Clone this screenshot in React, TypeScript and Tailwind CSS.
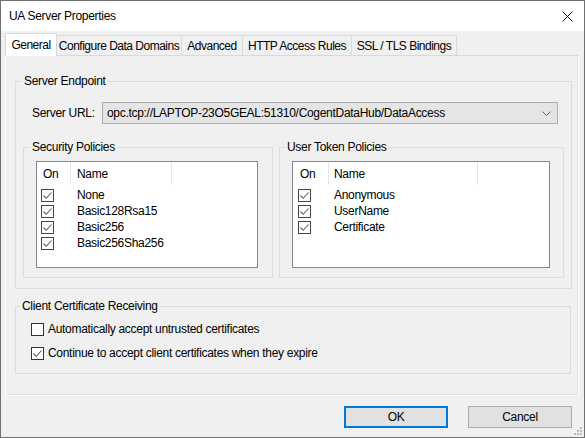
import React from "react";

const font = "font-['Liberation_Sans',Arial,sans-serif] tracking-[-0.3px]";

function Box({ checked, tone = "#333333" }: { checked: boolean; tone?: string }) {
  return (
    <span className="flex h-[13px] w-[13px] shrink-0 items-center justify-center border bg-white" style={{ borderColor: tone }}>
      {checked && (
        <svg width="11" height="11" viewBox="0 0 11 11">
          <path d="M1.5 5.5 L4.3 8.3 L9.5 2.5" fill="none" stroke="#5c5c5c" strokeWidth="1.1" />
        </svg>
      )}
    </span>
  );
}

function ListView({
  width,
  col1,
  col2,
  onPad,
  boxPad,
  namePad,
  rows,
}: {
  width: string;
  col1: string;
  col2: string;
  onPad: string;
  boxPad: string;
  namePad: string;
  rows: string[];
}) {
  return (
    <div className={`${width} h-[107px] border border-[#828790] bg-white`}>
      <div className="flex h-[25px] items-start">
        <div className={`${col1} ${onPad} flex h-[23px] items-center border-r border-[#e5e5e5]`}>On</div>
        <div className={`${col2} ${namePad} flex h-[23px] items-center border-r border-[#e5e5e5]`}>Name</div>
      </div>
      {rows.map((r) => (
        <div key={r} className="flex h-[16px] items-center">
          <div className={`${col1} ${boxPad} flex`}>
            <Box checked tone="#444444" />
          </div>
          <div className={namePad}>{r}</div>
        </div>
      ))}
    </div>
  );
}

export default function App() {
  return (
    <div className={`relative flex h-[438px] w-[585px] flex-col border border-[#707070] bg-[#f0f0f0] text-[12px] text-black ${font}`}>
      {/* Title bar */}
      <div className="flex h-[30px] shrink-0 items-center justify-between bg-white pl-[8px] pr-[11px]">
        <span>UA Server Properties</span>
        <svg width="11" height="11" viewBox="0 0 11 11">
          <path d="M0.5 0.5 L10.5 10.5 M10.5 0.5 L0.5 10.5" stroke="#111" strokeWidth="1" />
        </svg>
      </div>

      {/* Tabs */}
      <div className="mt-[2px] flex h-[22px] items-end whitespace-nowrap pl-[4px] tracking-[-0.5px]">
        <div className="relative z-10 -mb-px flex h-[23px] w-[52px] items-start justify-center border border-b-0 border-[#d9d9d9] bg-white pt-[2px]">
          General
        </div>
        {[
          ["Configure Data Domains", "w-[126px]"],
          ["Advanced", "w-[62px]"],
          ["HTTP Access Rules", "w-[110px]"],
          ["SSL / TLS Bindings", "w-[106px]"],
        ].map(([label, w]) => (
          <div key={label} className={`-ml-px flex h-[20px] ${w} items-center justify-center border border-b-0 border-[#d9d9d9] bg-[#f0f0f0] pt-px`}>
            {label}
          </div>
        ))}
      </div>

      {/* Tab panel */}
      <div className="ml-[4px] h-[341px] w-[574px] border border-white border-t-[#d9d9d9] pl-[9px] pr-[7px] pt-[17px] shadow-[inset_-1px_-1px_0_#e3e3e3]">
        <fieldset className="border border-[#dcdcdc]">
          <legend className="ml-[6px] px-[2px] leading-[16px]">Server Endpoint</legend>
          <div className="px-[7px] pb-[10px] pt-[13px]">
            <div className="flex h-[22px] items-center pl-[9px]">
              <span className="w-[70px]">Server URL:</span>
              <div className="flex h-[22px] w-[456px] items-center justify-between border border-[#adadad] bg-[#e5e5e5] pl-[4px] pr-[6px]">
                <span>opc.tcp://LAPTOP-23O5GEAL:51310/CogentDataHub/DataAccess</span>
                <svg width="9" height="5" viewBox="0 0 9 5">
                  <path d="M0.5 0.5 L4.5 4.5 L8.5 0.5" fill="none" stroke="#606060" strokeWidth="1" />
                </svg>
              </div>
            </div>

            <div className="mt-[15px] flex gap-[6px]">
              <fieldset className="w-[250px] border border-[#dcdcdc]">
                <legend className="ml-[6px] px-[2px] leading-[16px]">Security Policies</legend>
                <div className="pb-[9px] pl-[12px] pt-[6px]">
                  <ListView
                    width="w-[222px]"
                    col1="w-[34px]"
                    col2="w-[101px]"
                    onPad="pl-[6px]"
                    boxPad="pl-[4px]"
                    namePad="pl-[6px]"
                    rows={["None", "Basic128Rsa15", "Basic256", "Basic256Sha256"]}
                  />
                </div>
              </fieldset>
              <fieldset className="w-[285px] border border-[#dcdcdc]">
                <legend className="ml-[5px] px-[2px] leading-[16px]">User Token Policies</legend>
                <div className="pb-[9px] pl-[12px] pt-[6px]">
                  <ListView
                    width="w-[258px]"
                    col1="w-[36px]"
                    col2="w-[149px]"
                    onPad="pl-[7px]"
                    boxPad="pl-[5px]"
                    namePad="pl-[5px]"
                    rows={["Anonymous", "UserName", "Certificate"]}
                  />
                </div>
              </fieldset>
            </div>
          </div>
        </fieldset>

        <fieldset className="mt-[9px] border border-[#dcdcdc]">
          <legend className="ml-[4px] px-[2px] leading-[16px]">Client Certificate Receiving</legend>
          <div className="pb-[10px] pl-[15px] pt-[5px]">
            <div className="flex h-[20px] items-center gap-[4px]">
              <Box checked={false} />
              <span>Automatically accept untrusted certificates</span>
            </div>
            <div className="mt-[4px] flex h-[20px] items-center gap-[4px]">
              <Box checked />
              <span>Continue to accept client certificates when they expire</span>
            </div>
          </div>
        </fieldset>
      </div>

      {/* Buttons */}
      <div className="mt-[10px] flex justify-end gap-[20px] pr-[12px]">
        <button className="flex h-[22px] w-[104px] items-center justify-center border-2 border-[#0078d7] bg-[#e1e1e1]">OK</button>
        <button className="flex h-[22px] w-[104px] items-center justify-center border border-[#adadad] bg-[#e1e1e1]">Cancel</button>
      </div>

      {/* Resize grip */}
      <svg className="absolute bottom-px right-px" width="10" height="10" viewBox="0 0 10 10">
        {[
          [7, 1],
          [4, 4],
          [7, 4],
          [1, 7],
          [4, 7],
          [7, 7],
        ].map(([x, y]) => (
          <rect key={`${x}-${y}`} x={x} y={y} width="2" height="2" fill="#bcbcbc" />
        ))}
      </svg>
    </div>
  );
}
